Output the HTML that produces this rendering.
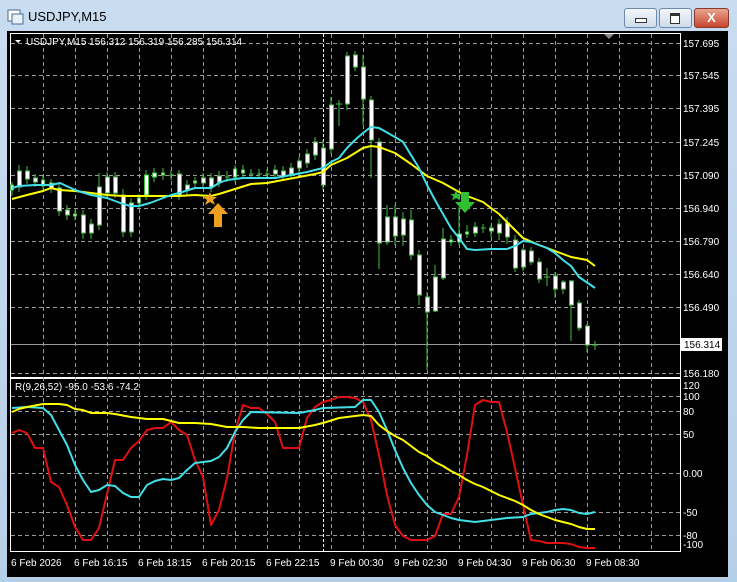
<!DOCTYPE html>
<html><head><meta charset="utf-8"><style>
body{margin:0;width:737px;height:582px;overflow:hidden;background:#bcd3ea;font-family:"Liberation Sans",sans-serif}
.win{position:absolute;left:0;top:0;width:737px;height:582px;background:linear-gradient(#c9dcf0,#b6cfe8);}
.title{position:absolute;left:28px;top:9px;font-size:13px;color:#000}
.btn{position:absolute;top:8px;height:18px;border:1px solid #6d8aa8;border-radius:3px;background:linear-gradient(#f2f6fb,#cfdcea)}
svg{position:absolute;left:0;top:0}
</style></head><body><div class="win">
<svg width="20" height="20" style="left:6px;top:7px"><rect x="2" y="3" width="12" height="11" fill="#fff" stroke="#4a6b91"/><rect x="6" y="7" width="11" height="10" fill="#e8f0f8" stroke="#4a6b91"/></svg>
<div class="title">USDJPY,M15</div>
<div class="btn" style="left:624px;width:31px"><div style="position:absolute;left:10px;top:9px;width:10px;height:3px;border:1px solid #333;background:#fff"></div></div>
<div class="btn" style="left:659px;width:31px"><div style="position:absolute;left:10px;top:4px;width:8px;height:7px;border:1px solid #333;border-top-width:3px;background:#fff"></div></div>
<div class="btn" style="left:694px;width:33px;background:linear-gradient(#e8a590,#c8452f);border-color:#8a3a2a;color:#fff;font-weight:bold;font-size:13px;text-align:center;line-height:18px">X</div>
<svg width="737" height="582" font-family="Liberation Sans, sans-serif">
<rect x="7" y="31" width="721" height="546" fill="#000"/>
<rect x="10.5" y="33.5" width="670" height="344" fill="none" stroke="#fff"/>
<rect x="10.5" y="378.5" width="670" height="173" fill="none" stroke="#fff"/>
<g stroke="#9a9a9a" stroke-dasharray="4,3" stroke-width="1">
<path d="M11 43.5H680M11 75.5H680M11 108.5H680M11 142.5H680M11 175.5H680M11 208.5H680M11 241.5H680M11 274.5H680M11 307.5H680M11 373.5H680"/>
<path d="M11 396.5H680M11 411.5H680M11 434.5H680M11 473.5H680M11 512.5H680M11 535.5H680"/>
<path d="M43.5 34V551M75.5 34V551M107.5 34V551M139.5 34V551M171.5 34V551M203.5 34V551M235.5 34V551M267.5 34V551M299.5 34V551M331.5 34V551M363.5 34V551M395.5 34V551M427.5 34V551M459.5 34V551M491.5 34V551M523.5 34V551M555.5 34V551M587.5 34V551M619.5 34V551M651.5 34V551"/>
</g>
<path d="M323.5 34V551" stroke="#fff" stroke-dasharray="3,2"/>
<path d="M11 344.5H680" stroke="#999"/>
<g fill="#fff" font-size="10">
<text x="683" y="47">157.695</text><text x="683" y="79">157.545</text><text x="683" y="112">157.395</text><text x="683" y="146">157.245</text><text x="683" y="179">157.090</text><text x="683" y="212">156.940</text><text x="683" y="245">156.790</text><text x="683" y="278">156.640</text><text x="683" y="311">156.490</text><text x="683" y="377">156.180</text>
<text x="683" y="389">120</text><text x="683" y="400">100</text><text x="683" y="415">80</text><text x="683" y="438">50</text><text x="683" y="477">0.00</text><text x="683" y="516">-50</text><text x="683" y="539">-80</text><text x="683" y="548">-100</text>
<text x="11" y="566">6 Feb 2026</text><text x="74" y="566">6 Feb 16:15</text><text x="138" y="566">6 Feb 18:15</text><text x="202" y="566">6 Feb 20:15</text><text x="266" y="566">6 Feb 22:15</text><text x="330" y="566">9 Feb 00:30</text><text x="394" y="566">9 Feb 02:30</text><text x="458" y="566">9 Feb 04:30</text><text x="522" y="566">9 Feb 06:30</text><text x="586" y="566">9 Feb 08:30</text>
<text x="26" y="45">USDJPY,M15  156.312 156.319 156.285 156.314</text>
<text x="15" y="390">R(9,26,52) -95.0 -53.6 -74.2</text>
</g>
<path d="M15 40h6l-3 3z" fill="#fff"/>
<path d="M604 34h10l-5 5z" fill="#888"/>
<rect x="681" y="338" width="41" height="13" fill="#fff"/><text x="684" y="348" font-size="10" fill="#000">156.314</text>
<g stroke="#3fc23f" fill="#fff" stroke-width="1">
<path d="M12 182V196M19 165V192M27 166V184M35 174V187M43 176V191M51 179V193M59 183V216M67 205V220M75 210V220M83 210V239M91 219V239M99 173V230M107 172V198M115 172V198M123 189V237M131 198V237M139 194V208M146 170V200M154 168V182M163 168V180M171 170V180M179 170V200M187 180V195M195 177V188M203 173V188M211 173V192M219 171V187M227 171V182M235 165V182M243 165V178M251 169V179M259 169V179M267 169V179M275 165V179M283 166V181M291 163V179M299 157V175M307 149V168M315 137V160M323 140V190M331 97V154M339 100V126M347 52V110M355 51V71M363 55V125M371 96V178M379 138V269M387 205V245M395 205V245M403 212V246M411 210V260M419 250V305M427 292V370M435 265V312M443 228V280M451 235V246M459 207V245M467 225V238M475 222V237M483 224V233M491 225V237M499 219V240M507 217V244M515 235V272M523 248V271M531 247V265M539 258V283M547 268V286M555 272V298M563 280V294M571 280V341M579 300V331M587 324V352M595 341V350"/>
<path d="M10.5 185h3v5h-3zM17.5 171h4v16h-4zM25.5 171h4v8h-4zM33.5 178h4v4h-4zM41.5 180h3v6h-3zM49.5 183h4v5h-4zM57.5 188h4v23h-4zM65.5 210h4v5h-4zM73.5 214h3v2h-3zM81.5 215h4v18h-4zM89.5 224h4v9h-4zM97.5 187h4v38h-4zM105.5 177h4v16h-4zM113.5 177h4v16h-4zM121.5 195h4v37h-4zM129.5 203h4v29h-4zM137.5 198h3v5h-3zM144.5 175h4v20h-4zM152.5 173h4v4h-4zM161.5 173h3v2h-3zM177.5 174h4v21h-4zM185.5 185h4v5h-4zM193.5 181h3v2h-3zM201.5 178h4v5h-4zM209.5 178h4v9h-4zM217.5 176h4v6h-4zM233.5 169h3v8h-3zM241.5 170h3v3h-3zM273.5 170h4v4h-4zM281.5 171h4v5h-4zM289.5 168h4v6h-4zM297.5 161h4v7h-4zM305.5 154h4v9h-4zM313.5 142h4v13h-4zM321.5 148h4v37h-4zM329.5 105h4v44h-4zM345.5 56h4v48h-4zM353.5 55h4v12h-4zM361.5 67h4v32h-4zM369.5 100h4v40h-4zM377.5 142h4v101h-4zM385.5 217h4v25h-4zM393.5 217h4v19h-4zM401.5 219h4v16h-4zM409.5 220h4v35h-4zM417.5 255h4v40h-4zM425.5 297h4v15h-4zM433.5 277h4v34h-4zM441.5 239h4v39h-4zM449.5 240h3v2h-3zM457.5 234h4v8h-4zM465.5 232h3v2h-3zM473.5 227h4v6h-4zM489.5 228h4v3h-4zM497.5 224h4v9h-4zM505.5 223h4v14h-4zM513.5 240h4v28h-4zM521.5 250h4v17h-4zM529.5 251h4v11h-4zM537.5 262h4v17h-4zM553.5 276h4v13h-4zM561.5 282h4v7h-4zM569.5 281h4v24h-4zM577.5 303h4v25h-4zM585.5 326h4v19h-4z"/>
<path d="M336 104h6M169 175h5M225 177h5M249 174h5M257 174h5M265 174h5M481 228h5M544 277h6M592 345h6"/>
</g>
<g fill="none" stroke-width="2" stroke-linejoin="round">
<polyline stroke="#ffff00" points="12,199 27,195 43,191 51,188 59,190 75,191 91,193 107,195 123,196 139,196 163,196 179,196 195,195 211,196 219,194 235,189 251,184 267,183 283,180 299,177 315,174 323,172 331,165 347,158 363,148 371,146 379,147 395,153 411,164 427,176 443,183 459,192 467,196 483,202 499,214 507,222 515,230 523,238 539,245 555,251 571,257 587,260 595,266"/>
<polyline stroke="#40e0e8" points="12,188 19,186 35,185 51,185 60,183 75,190 91,195 107,198 123,204 131,206 139,206 150,203 171,195 179,193 195,188 211,188 219,183 227,180 243,178 259,178 275,178 291,175 307,172 315,170 323,168 331,162 339,158 347,148 355,140 363,133 371,127 379,128 395,137 403,142 411,155 419,168 427,185 435,200 443,214 451,228 459,238 467,249 475,250 491,249 507,249 515,246 523,241 531,242 547,248 555,253 563,260 571,266 579,277 595,288"/>
<polyline stroke="#e01010" points="12,433 19,430 27,433 35,448 43,448 51,482 59,487 67,505 75,527 83,540 91,540 99,528 107,494 115,460 123,460 131,448 139,441 147,430 155,428 163,428 171,422 179,430 187,435 195,460 203,477 211,525 219,510 227,478 235,432 243,405 251,408 259,408 267,414 275,422 283,448 291,448 299,448 307,418 315,407 323,402 331,400 339,397 347,397 355,398 363,402 371,420 379,455 387,495 395,525 403,536 411,540 419,540 427,540 435,536 443,514 451,514 459,497 467,455 475,405 483,400 491,402 499,402 507,432 515,468 523,505 531,540 539,541 547,543 555,543 563,543 571,544 579,547 587,548 595,548"/>
<polyline stroke="#40e0e8" points="12,408 27,407 43,408 51,415 59,430 67,445 75,465 83,480 91,492 99,490 107,485 115,486 123,493 131,497 139,497 147,485 155,481 163,479 171,480 179,478 187,470 195,463 203,462 211,461 219,457 227,448 235,432 243,420 251,412 299,413 315,410 323,408 355,407 363,400 371,400 379,412 387,430 395,450 403,468 411,483 419,495 427,505 435,512 443,515 451,518 459,520 475,522 491,520 507,518 523,517 531,514 547,512 555,510 563,509 571,510 579,513 587,514 595,512"/>
<polyline stroke="#ffff00" points="12,412 19,409 27,407 43,404 59,404 67,405 75,409 83,410 91,413 107,413 115,414 131,417 147,419 163,419 179,423 195,423 211,424 227,427 243,427 259,428 299,428 315,425 323,423 339,418 355,416 363,415 371,416 379,425 387,431 395,436 403,440 411,446 419,452 427,456 435,462 443,466 451,471 459,475 467,480 475,484 483,487 491,491 499,495 507,498 515,501 523,505 531,510 539,514 547,517 555,520 563,522 571,524 579,527 587,529 595,529"/>
</g>
<path d="M210 192l2 5 5 0-4 3 2 5-5-3-5 3 2-5-4-3 5 0z" fill="#f0a020"/>
<path d="M218 203l10 11h-6v13h-8v-13h-6z" fill="#f0a020"/>
<path d="M456 190l1.5 4 4 0-3 2.5 1.5 4-4-2.5-4 2.5 1.5-4-3-2.5 4 0z" fill="#30c030"/>
<path d="M465 213l-10-11h6v-10h8v10h6z" fill="#30c030"/>
</svg></div></body></html>
